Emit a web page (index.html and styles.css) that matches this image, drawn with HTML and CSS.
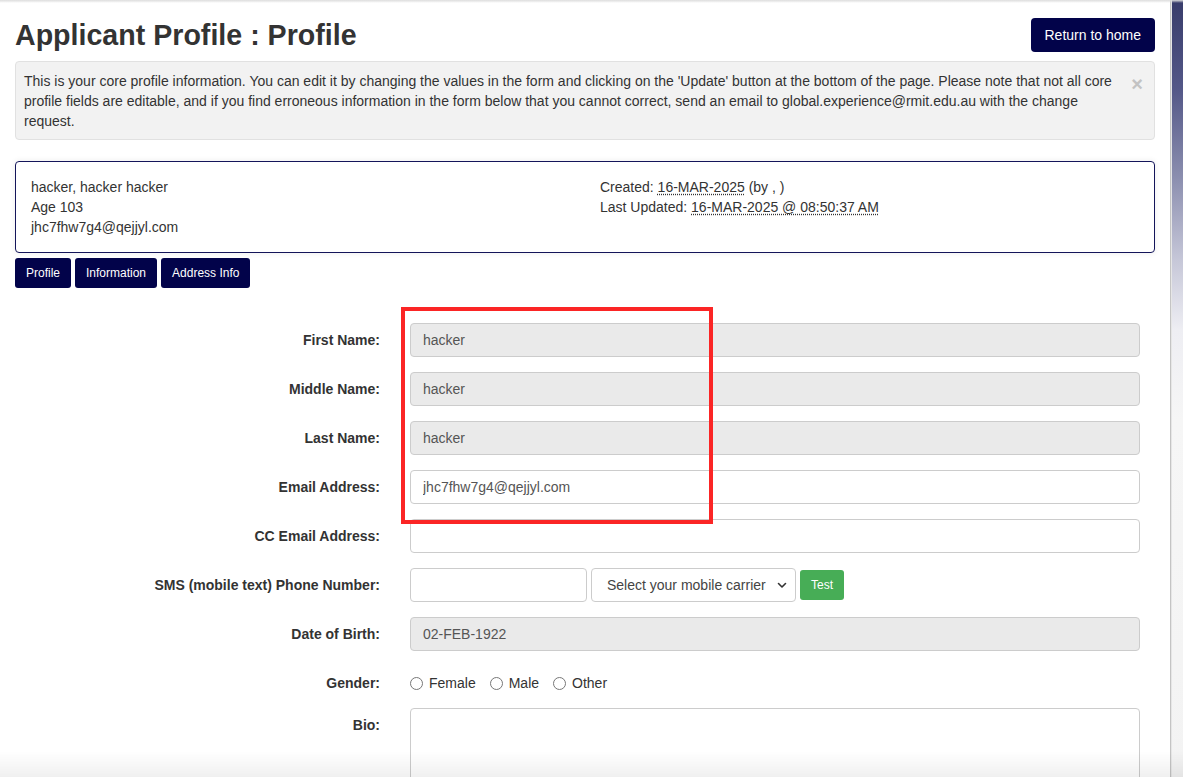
FILE: index.html
```html
<!DOCTYPE html>
<html lang="en">
<head>
<meta charset="utf-8">
<title>Applicant Profile : Profile</title>
<link rel="stylesheet" href="styles.css">
</head>
<body>
<div class="layout">
  <main class="page">
    <header class="page-header">
      <h1 class="title">Applicant Profile : Profile</h1>
      <button class="btn btn-navy btn-home">Return to home</button>
    </header>

    <div class="alert">
      This is your core profile information. You can edit it by changing the values in the form and clicking on the 'Update' button at the bottom of the page. Please note that not all core profile fields are editable, and if you find erroneous information in the form below that you cannot correct, send an email to global.experience@rmit.edu.au with the change request.
      <span class="alert-close">×</span>
    </div>

    <section class="card">
      <div class="card-col">
        <div>hacker, hacker hacker</div>
        <div>Age 103</div>
        <div>jhc7fhw7g4@qejjyl.com</div>
      </div>
      <div class="card-col">
        <div>Created: <abbr class="dotted">16-MAR-2025</abbr> (by , )</div>
        <div>Last Updated: <abbr class="dotted">16-MAR-2025 @ 08:50:37 AM</abbr></div>
      </div>
    </section>

    <nav class="tabs">
      <button class="btn btn-navy btn-tab">Profile</button>
      <button class="btn btn-navy btn-tab">Information</button>
      <button class="btn btn-navy btn-tab">Address Info</button>
    </nav>

    <form class="form">
      <div class="annot"></div>

      <label class="form-label">First Name:</label>
      <input class="field disabled" type="text" value="hacker" disabled>

      <label class="form-label">Middle Name:</label>
      <input class="field disabled" type="text" value="hacker" disabled>

      <label class="form-label">Last Name:</label>
      <input class="field disabled" type="text" value="hacker" disabled>

      <label class="form-label">Email Address:</label>
      <input class="field" type="text" value="jhc7fhw7g4@qejjyl.com">

      <label class="form-label">CC Email Address:</label>
      <input class="field" type="text" value="">

      <label class="form-label">SMS (mobile text) Phone Number:</label>
      <div class="sms">
        <input class="field phone" type="text" value="">
        <span class="select-wrap">
          <select class="field select">
            <option>Select your mobile carrier</option>
          </select>
          <svg class="chev" width="10" height="7" viewBox="0 0 10 7"><path d="M1.5 1.5 L5 5 L8.5 1.5" fill="none" stroke="#333" stroke-width="1.6" stroke-linecap="round" stroke-linejoin="round"/></svg>
        </span>
        <button type="button" class="btn btn-test">Test</button>
      </div>

      <label class="form-label">Date of Birth:</label>
      <input class="field disabled" type="text" value="02-FEB-1922" disabled>

      <label class="form-label top">Gender:</label>
      <div class="radios">
        <label class="radio"><span class="dot"></span>Female</label>
        <label class="radio"><span class="dot"></span>Male</label>
        <label class="radio"><span class="dot"></span>Other</label>
      </div>

      <label class="form-label top">Bio:</label>
      <textarea class="field textarea"></textarea>
    </form>
  </main>
  <aside class="edge"></aside>
</div>
<div class="top-shade"></div>
<div class="bottom-fade"></div>
</body>
</html>
```

FILE: styles.css
```css
* { box-sizing: border-box; }
html, body { margin: 0; padding: 0; }
body {
  font-family: "Liberation Sans", Arial, Helvetica, sans-serif;
  font-size: 14px;
  line-height: 20px;
  color: #333;
  background: #fff;
  overflow: hidden;
  height: 777px;
}
.layout {
  display: flex;
  min-height: 777px;
}
.page {
  width: 1170px;
  flex: none;
  padding: 18px 15px 0 15px;
  position: relative;
  background: #fff;
}
.edge {
  flex: 1;
  border-left: 1px solid #c4c4c4;
  background: linear-gradient(to bottom, #383c6b 0px, #545888 90px, #8d90b0 180px, #c6c7d8 260px, #eeeef3 330px, #f6f6f6 420px, #f3f3f3 777px);
  box-shadow: inset 1px 0 0 #e6e6e6;
}
.top-shade {
  position: fixed;
  left: 0; top: 0; right: 0;
  height: 3px;
  background: linear-gradient(to bottom, #dcdcdc, rgba(255,255,255,0));
  pointer-events: none;
}
.bottom-fade {
  position: fixed;
  left: 0; right: 0; bottom: 0;
  height: 26px;
  background: linear-gradient(to bottom, rgba(0,0,0,0), rgba(0,0,0,0.06));
  pointer-events: none;
}

.page-header {
  display: flex;
  justify-content: space-between;
  align-items: center;
  height: 34px;
}
.title {
  margin: 0;
  font-size: 28.6px;
  line-height: 34px;
  font-weight: bold;
  color: #333;
}
.btn {
  font-family: inherit;
  border: none;
  cursor: pointer;
}
.btn-navy {
  background: #02034a;
  color: #fff;
  border-radius: 4px;
}
.btn-home {
  height: 34px;
  padding: 0 14px;
  font-size: 14px;
}

.alert {
  position: relative;
  margin-top: 9px;
  background: #f2f2f2;
  border: 1px solid #e1e1e1;
  border-radius: 4px;
  padding: 9px 35px 8px 8px;
  line-height: 20px;
}
.alert-close {
  position: absolute;
  right: 11px;
  top: 12px;
  font-size: 20px;
  font-weight: bold;
  color: #c3c3c3;
  line-height: 20px;
}

.card {
  margin-top: 21px;
  border: 1px solid #14155a;
  border-radius: 4px;
  padding: 15px;
  display: grid;
  grid-template-columns: 1fr 1fr;
  column-gap: 30px;
  min-height: 92px;
  box-shadow: 0 0 6px rgba(0,0,0,0.08);
}
.dotted {
  text-decoration: underline dotted;
  text-underline-offset: 2px;
}

.tabs {
  margin-top: 5px;
  display: flex;
  gap: 4px;
}
.btn-tab {
  height: 30px;
  padding: 0 11px;
  font-size: 12px;
  border-radius: 3px;
}

.form {
  position: relative;
  margin-top: 35px;
  display: grid;
  grid-template-columns: 365px 730px;
  column-gap: 30px;
  row-gap: 15px;
  align-items: center;
}
.form-label {
  text-align: right;
  font-weight: bold;
  font-size: 14px;
}
.form-label.top {
  align-self: start;
  padding-top: 7px;
}
.field {
  font-family: inherit;
  font-size: 14px;
  color: #555;
  height: 34px;
  border: 1px solid #ccc;
  border-radius: 4px;
  padding: 0 12px;
  background: #fff;
  width: 100%;
  outline: none;
}
.field.disabled {
  background: #eaeaea;
  color: #555;
  -webkit-text-fill-color: #555;
  opacity: 1;
}
.sms {
  display: flex;
  align-items: center;
}
.phone {
  width: 177px;
}
.select-wrap {
  position: relative;
  margin-left: 4px;
  width: 205px;
  display: block;
}
.select {
  appearance: none;
  -webkit-appearance: none;
  padding: 0 24px 0 15px;
  color: #444;
  width: 100%;
}
.chev {
  position: absolute;
  right: 9px;
  top: 14px;
  pointer-events: none;
}
.btn-test {
  margin-left: 4px;
  height: 30px;
  width: 44px;
  background: #47ad56;
  color: #fff;
  font-size: 12px;
  border-radius: 3px;
  padding: 0;
}
.radios {
  display: flex;
  align-self: start;
  padding-top: 7px;
  gap: 14px;
}
.radio {
  display: flex;
  align-items: center;
  font-size: 14px;
  color: #333;
}
.dot {
  width: 13px;
  height: 13px;
  border: 1px solid #777;
  border-radius: 50%;
  margin-right: 6px;
  background: #fff;
}
.textarea {
  height: 110px;
  resize: vertical;
  padding: 6px 12px;
}
.annot {
  position: absolute;
  left: 386px;
  top: -16px;
  width: 312px;
  height: 217px;
  border: 4px solid #fb2525;
  pointer-events: none;
  z-index: 2;
}
```
